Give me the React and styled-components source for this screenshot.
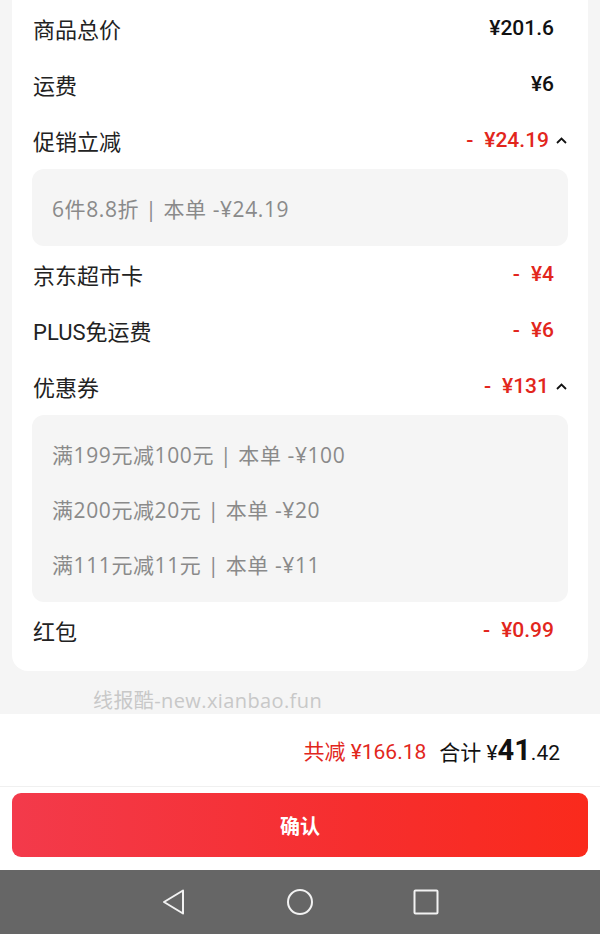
import styled, { createGlobalStyle } from 'styled-components';

const GlobalStyle = createGlobalStyle`
  html, body {
    margin: 0;
    padding: 0;
    background: #f5f5f5;
  }
  body {
    font-family: Roboto, 'Noto Sans CJK SC', sans-serif;
  }
`;

// Layout
const Page = styled.div`
  width: 600px;
  height: 934px;
  display: flex;
  flex-direction: column;
  background: #f5f5f5;
  overflow: hidden;
`;

const Card = styled.div`
  margin: 0 12px;
  padding: 0 20px 13px;
  background: #fff;
  border-radius: 0 0 16px 16px;
`;

const Row = styled.div`
  height: 56px;
  display: flex;
  align-items: center;
  justify-content: space-between;
`;

const Label = styled.span`
  font-size: 22px;
  color: #222;
  padding-left: 1px;
`;

const Value = styled.span`
  display: flex;
  align-items: center;
  font-size: 21px;
  font-weight: 500;
  color: ${(props) => (props.red ? '#e2261c' : '#111')};
  padding-right: ${(props) => (props.chevron ? '0' : '14px')};
`;

const Minus = styled.span`
  margin-right: 11px;
`;

const Chevron = styled.svg`
  width: 13px;
  height: 13px;
  margin-left: 6px;
`;

const DetailBox = styled.div`
  margin: 1px 0 0;
  padding: 11px 20px;
  background: #f5f5f5;
  border-radius: 12px;
`;

const DetailLine = styled.div`
  height: 55px;
  display: flex;
  align-items: center;
  font-family: 'Open Sans', 'Noto Sans CJK SC', sans-serif;
  font-size: 21px;
  letter-spacing: 0.6px;
  color: #8a8a8a;
`;

const Watermark = styled.div`
  height: 43px;
  padding: 18px 0 0 93px;
  box-sizing: border-box;
  font-family: 'Open Sans', 'Noto Sans CJK SC', sans-serif;
  font-size: 20px;
  letter-spacing: 0.4px;
  color: #c8c8c8;
  line-height: 24px;
`;

const TotalBar = styled.div`
  height: 72px;
  display: flex;
  align-items: center;
  justify-content: flex-end;
  padding-right: 40px;
  background: #fff;
  border-bottom: 1px solid #f0f0f0;
`;

const Saved = styled.span`
  font-size: 21px;
  color: #e2261c;
  margin-right: 13px;
`;

const Total = styled.span`
  display: flex;
  align-items: baseline;
  font-size: 21px;
  color: #111;
`;

const Big = styled.span`
  font-size: 29px;
  font-weight: 700;
`;

const ButtonArea = styled.div`
  height: 83px;
  padding: 6px 12px 0;
  box-sizing: border-box;
  background: #fff;
`;

const ConfirmButton = styled.button`
  width: 100%;
  height: 64px;
  border: none;
  border-radius: 9px;
  background: linear-gradient(90deg, #f33a4b 0%, #f62e2e 60%, #fa2a1c 100%);
  color: #fff;
  font-family: 'Noto Sans CJK SC', sans-serif;
  font-size: 20px;
  font-weight: 700;
`;

const NavBar = styled.div`
  flex: 1;
  display: flex;
  align-items: center;
  justify-content: center;
  gap: 100px;
  background: #666;
`;

const NavIcon = styled.svg`
  width: 26px;
  height: 26px;
  fill: none;
  stroke: #f2f2f2;
  stroke-width: 2;
  stroke-linejoin: round;
`;

const ChevronUp = () => (
  <Chevron viewBox="0 0 13 13">
    <path d="M2 9 L6.5 4.5 L11 9" fill="none" stroke="#111" strokeWidth="1.8" />
  </Chevron>
);

const Discount = ({ amount, chevron }) => (
  <Value red chevron={chevron}>
    <Minus>-</Minus>
    {amount}
    {chevron && <ChevronUp />}
  </Value>
);

const rowsTop = [
  { label: '商品总价', value: '¥201.6' },
  { label: '运费', value: '¥6' },
];

export default function App() {
  return (
    <Page>
      <GlobalStyle />
      <Card>
        {rowsTop.map((r) => (
          <Row key={r.label}>
            <Label>{r.label}</Label>
            <Value>{r.value}</Value>
          </Row>
        ))}
        <Row>
          <Label>促销立减</Label>
          <Discount amount="¥24.19" chevron />
        </Row>
        <DetailBox>
          <DetailLine>6件8.8折 | 本单 -¥24.19</DetailLine>
        </DetailBox>
        <Row>
          <Label>京东超市卡</Label>
          <Discount amount="¥4" />
        </Row>
        <Row>
          <Label>PLUS免运费</Label>
          <Discount amount="¥6" />
        </Row>
        <Row>
          <Label>优惠券</Label>
          <Discount amount="¥131" chevron />
        </Row>
        <DetailBox>
          <DetailLine>满199元减100元 | 本单 -¥100</DetailLine>
          <DetailLine>满200元减20元 | 本单 -¥20</DetailLine>
          <DetailLine>满111元减11元 | 本单 -¥11</DetailLine>
        </DetailBox>
        <Row>
          <Label>红包</Label>
          <Discount amount="¥0.99" />
        </Row>
      </Card>

      <Watermark>线报酷-new.xianbao.fun</Watermark>

      <TotalBar>
        <Saved>共减 ¥166.18</Saved>
        <Total>
          合计 ¥<Big>41</Big>.42
        </Total>
      </TotalBar>

      <ButtonArea>
        <ConfirmButton>确认</ConfirmButton>
      </ButtonArea>

      <NavBar>
        <NavIcon viewBox="0 0 26 26">
          <path d="M22 1.5 L3 13 L22 24.5 Z" />
        </NavIcon>
        <NavIcon viewBox="0 0 26 26">
          <circle cx="13" cy="13" r="12" />
        </NavIcon>
        <NavIcon viewBox="0 0 26 26">
          <rect x="1.5" y="1.5" width="23" height="23" rx="1" />
        </NavIcon>
      </NavBar>
    </Page>
  );
}
